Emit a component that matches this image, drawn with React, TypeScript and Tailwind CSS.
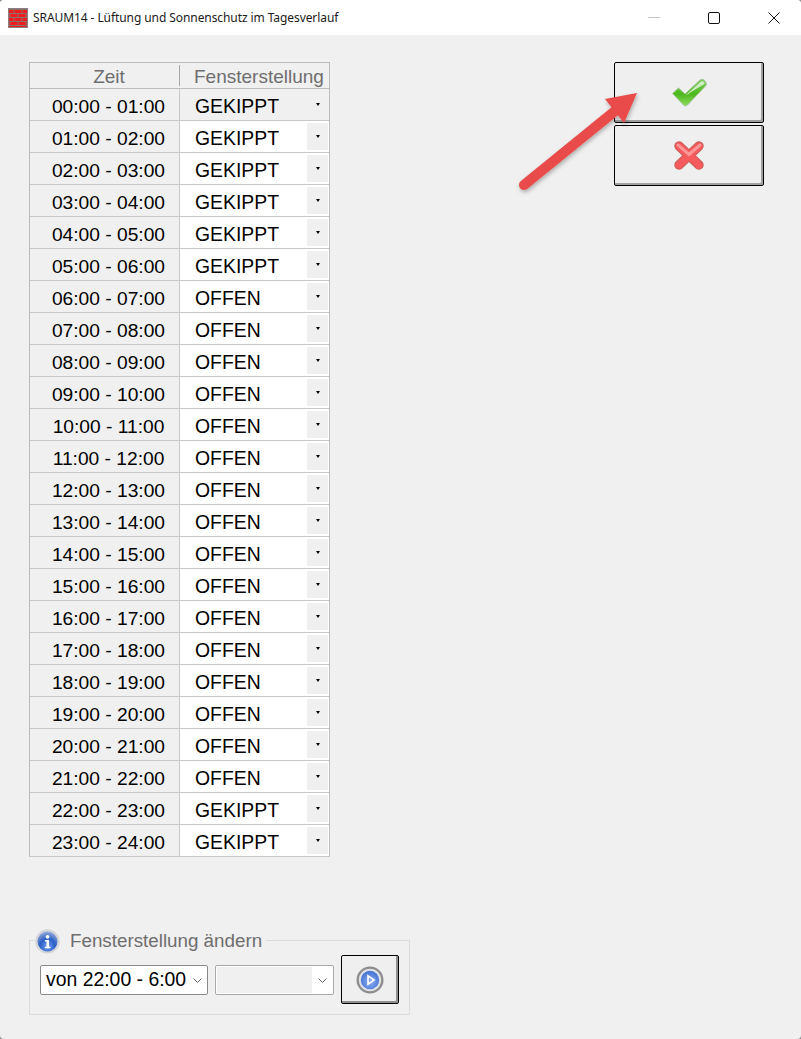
const HOURS = [
  'GEKIPPT', 'GEKIPPT', 'GEKIPPT', 'GEKIPPT', 'GEKIPPT', 'GEKIPPT',
  'OFFEN', 'OFFEN', 'OFFEN', 'OFFEN', 'OFFEN', 'OFFEN', 'OFFEN', 'OFFEN', 'OFFEN', 'OFFEN',
  'OFFEN', 'OFFEN', 'OFFEN', 'OFFEN', 'OFFEN', 'OFFEN',
  'GEKIPPT', 'GEKIPPT',
];

function pad(n: number) {
  return String(n).padStart(2, '0');
}

function BrickLogo() {
  return (
    <svg width="20" height="20" viewBox="0 0 20 20" className="shrink-0">
      <rect width="20" height="20" fill="#ee1c1c" />
      <path d="M0 1.5H20M0 5.5H20M0 9.5H20M0 13.5H20M0 17.5H20" stroke="#8f6f6c" strokeWidth="1" />
      <path d="M6 2V5M14 2V5M2 6V9M10 6V9M18 6V9M6 10V13M14 10V13M2 14V17M10 14V17M18 14V17" stroke="#8f6f6c" strokeWidth="1" />
      <rect x="0.5" y="0.5" width="19" height="19" fill="none" stroke="#8a8080" strokeWidth="1" />
    </svg>
  );
}

function TitleBar() {
  return (
    <div className="flex h-[35px] items-center bg-white pl-[8px]">
      <BrickLogo />
      <span className="ml-[5px] font-['Noto_Sans',sans-serif] text-[12px] tracking-[-0.08px] text-[#1a1a1a]">
        SRAUM14 - Lüftung und Sonnenschutz im Tagesverlauf
      </span>
      <div className="ml-auto flex items-center">
        <div className="mr-[48px] h-px w-[12px] bg-[#c4c4c4]" />
        <div className="mr-[48px] h-[12px] w-[12px] rounded-[2px] border border-[#111]" />
        <svg width="12" height="12" viewBox="0 0 12 12" className="mr-[21px]">
          <path d="M0.5 0.5L11.5 11.5M11.5 0.5L0.5 11.5" stroke="#111" strokeWidth="1" />
        </svg>
      </div>
    </div>
  );
}

function TinyCaret() {
  return <div className="h-0 w-0 border-x-[2.5px] border-t-[3px] border-x-transparent border-t-black" />;
}

function HoursTable() {
  return (
    <div className="w-[301px] border border-[#bcbcbc] border-b-[#c8c8c8] text-[19.4px] leading-none">
      <div className="flex h-[26px] border-b border-[#bcbcbc] text-[#6e6e6e]">
        <div className="flex w-[149px] items-center justify-center pt-px pl-[9px] text-[19px]">
          <span>Zeit</span>
        </div>
        <div className="my-[2px] w-px bg-[#a8a8a8]" />
        <div className="flex flex-1 items-center whitespace-nowrap pt-px pl-[14px] text-[19px]">Fensterstellung</div>
      </div>
      {HOURS.map((value, i) => (
        <div key={i} className="flex h-[32px] border-b border-[#c8c8c8] last:h-[31px] last:border-b-0">
          <div className="flex w-[150px] items-center justify-center border-r border-[#c8c8c8] pl-[8px] pt-[4px] text-[19.2px] text-black">
            {pad(i)}:00 - {pad(i + 1)}:00
          </div>
          <div className={`flex flex-1 items-center justify-between pl-[15px] pr-[1px] text-black ${i === 0 ? 'bg-[#f0f0f0]' : 'bg-white'}`}>
            <span className="pt-[4px]">{value}</span>
            <div className={`flex h-[27px] w-[21px] items-center justify-center ${i === 0 ? '' : 'bg-[#f0f0f0]'}`}>
              <TinyCaret />
            </div>
          </div>
        </div>
      ))}
    </div>
  );
}

function GlossCheck() {
  return (
    <svg width="36" height="30" viewBox="0 0 36 30">
      <defs>
        <linearGradient id="checkFill" x1="0" y1="0" x2="0" y2="1">
          <stop offset="0" stopColor="#7fd05a" />
          <stop offset="0.55" stopColor="#4cb81c" />
          <stop offset="1" stopColor="#8fdc62" />
        </linearGradient>
      </defs>
      <path d="M1.5 15.5L7.5 10L14 16L29 2Q31 0.5 33 2L35 4.5Q36 6.5 34.5 8L16.5 27Q14.5 29 12.5 27Z" fill="url(#checkFill)" stroke="#a3c69b" strokeWidth="1" />
      <path d="M15 17L30 3.5Q32 2.5 33.5 4.5L33.5 6L20 14Q16 17.5 15 17Z" fill="#d9f0d2" opacity="0.9" />
    </svg>
  );
}

function GlossCross() {
  return (
    <svg width="32" height="31" viewBox="0 0 32 31">
      <path d="M6 6L26 25M26 6L6 25" stroke="#c8615c" strokeWidth="9.5" strokeLinecap="round" />
      <path d="M6 6L26 25M26 6L6 25" stroke="#f75a5c" strokeWidth="7.5" strokeLinecap="round" />
      <path d="M5 5L16 14.5L27 5" fill="none" stroke="#ffa8a8" strokeWidth="3" strokeLinecap="round" opacity="0.8" />
    </svg>
  );
}

function ActionButton({ children }: { children: React.ReactNode }) {
  return (
    <button className="flex h-[61px] w-[150px] items-center justify-center rounded-[2px] border border-black bg-[#efefef] shadow-[inset_-2px_-2px_0_#a0a0a0]">
      {children}
    </button>
  );
}

function RedArrow() {
  return (
    <svg width="130" height="110" viewBox="0 0 130 110" className="pointer-events-none absolute left-[515px] top-[86px]">
      <defs>
        <filter id="arrowShadow" x="-20%" y="-20%" width="140%" height="140%">
          <feDropShadow dx="1" dy="2" stdDeviation="2" floodColor="#000" floodOpacity="0.3" />
        </filter>
      </defs>
      <g filter="url(#arrowShadow)" fill="#e84c48">
        <path d="M9 99L100 25" stroke="#e84c48" strokeWidth="10" strokeLinecap="round" />
        <path d="M122 7L90 13L109 37Z" />
      </g>
    </svg>
  );
}

function InfoIcon() {
  return (
    <svg width="25" height="25" viewBox="0 0 24 24" className="shrink-0">
      <defs>
        <radialGradient id="infoFill" cx="0.5" cy="0.75" r="0.7">
          <stop offset="0" stopColor="#6f9cf0" />
          <stop offset="0.55" stopColor="#2a5fc6" />
          <stop offset="1" stopColor="#8aa4d8" />
        </radialGradient>
      </defs>
      <circle cx="12" cy="12" r="11.7" fill="#d4d5da" />
      <circle cx="12" cy="12" r="9.6" fill="url(#infoFill)" />
      <circle cx="12" cy="7.5" r="1.8" fill="#fff" />
      <path d="M9.5 10.5H13.5V17H15V18.5H9.5V17H11V12H9.5Z" fill="#fff" />
    </svg>
  );
}

function PlayIcon() {
  return (
    <svg width="28" height="28" viewBox="0 0 28 28">
      <defs>
        <radialGradient id="playFill" cx="0.5" cy="0.6" r="0.6">
          <stop offset="0" stopColor="#8fb0f2" />
          <stop offset="1" stopColor="#4170d2" />
        </radialGradient>
      </defs>
      <circle cx="14" cy="14" r="13.5" fill="#8c8c8c" />
      <circle cx="14" cy="14" r="11.2" fill="#e0e1e6" />
      <circle cx="14" cy="14" r="9.2" fill="url(#playFill)" />
      <path d="M12 9.8L18.2 14L12 18.2Z" fill="none" stroke="#fff" strokeWidth="1.6" />
    </svg>
  );
}

function Chevron() {
  return (
    <svg width="9" height="5" viewBox="0 0 9 5">
      <path d="M0.5 0.5L4.5 4.5L8.5 0.5" fill="none" stroke="#666" strokeWidth="1" />
    </svg>
  );
}

function ChangeGroup() {
  return (
    <div className="relative mt-[83px] ml-[29px] h-[75px] w-[381px] border border-[#dcdcdc]">
      <div className="absolute -top-[12px] left-[5px] flex h-[24px] items-center bg-[#f0f0f0] pr-[4px]">
        <InfoIcon />
        <span className="ml-[10px] text-[18.8px] leading-none text-[#6e6e6e]">Fensterstellung ändern</span>
      </div>
      <div className="flex items-start pl-[10px] pt-[24px]">
        <div className="flex h-[30px] w-[168px] items-center justify-between whitespace-nowrap rounded-[2px] border border-[#8a8a8a] bg-white pl-[5px] pr-[5px] text-[19.4px] leading-none text-black">
          <span>von 22:00 - 6:00</span>
          <Chevron />
        </div>
        <div className="ml-[7px] flex h-[30px] w-[119px] items-center justify-between rounded-[2px] border border-[#aaa] bg-white pr-[6px]">
          <div className="ml-px h-[26px] w-[95px] bg-[#f0f0f0]" />
          <Chevron />
        </div>
        <button className="-mt-[10px] ml-[7px] flex h-[49px] w-[58px] items-center justify-center rounded-[2px] border border-black bg-[#efefef] shadow-[inset_-2px_-2px_0_#8f8f8f]">
          <PlayIcon />
        </button>
      </div>
    </div>
  );
}

export default function App() {
  return (
    <div className="h-[1039px] w-[801px] bg-[#8f8f8f]">
      <div className="relative h-[1039px] w-[801px] overflow-hidden rounded-[4px] bg-[#f0f0f0] font-['Liberation_Sans',Arial,sans-serif]">
        <TitleBar />
        <div className="flex items-start justify-between pl-[29px] pr-[37px] pt-[27px]">
          <HoursTable />
          <div className="flex flex-col gap-[2px]">
            <ActionButton>
              <GlossCheck />
            </ActionButton>
            <ActionButton>
              <GlossCross />
            </ActionButton>
          </div>
        </div>
        <ChangeGroup />
        <RedArrow />
      </div>
    </div>
  );
}
